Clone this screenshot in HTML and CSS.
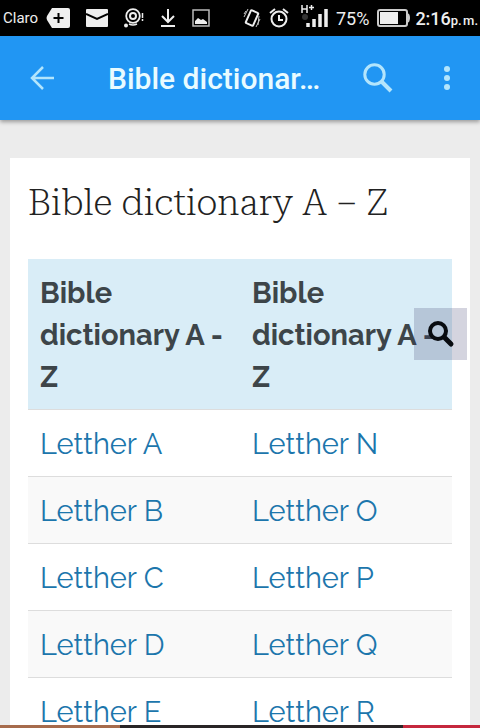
FILE: index.html
```html
<!DOCTYPE html>
<html lang="en">
<head>
  <meta charset="UTF-8" />
  <meta name="viewport" content="width=device-width, initial-scale=1.0" />
  <title>Bible dictionary A – Z</title>
  <link rel="stylesheet" href="styles.css">
</head>
<body>

  <div class="status-bar">
    <div class="status-left">
      <span>Claro</span>
      <svg width="24" height="20" viewBox="0 0 24 20"><path d="M6 0h16q2 0 2 2v16q0 2-2 2H6L1 12q-1-2 0-4z" fill="#eee"/><path d="M12.500 5v10M7.500 10h10" stroke="#000" stroke-width="2"/></svg>
      <svg width="22" height="18" viewBox="0 0 22 18"><rect width="22" height="18" rx="1" fill="#eee"/><path d="M0 5l11 5 11-5" fill="none" stroke="#000" stroke-width="2"/></svg>
      <svg width="20" height="20" viewBox="0 0 20 20"><circle cx="9" cy="8" r="6.800" fill="none" stroke="#eee" stroke-width="1.800"/><circle cx="9" cy="8" r="3" fill="none" stroke="#eee" stroke-width="2"/><circle cx="2" cy="17.500" r="2" fill="#eee"/><path d="M5 16q4 2 8 0M18.500 5v5M18.500 11v2" stroke="#eee" stroke-width="1.500" fill="none"/></svg>
      <svg width="16" height="20" viewBox="0 0 16 20"><path d="M8 1v13M2 8l6 6 6-6M1 18h14" fill="none" stroke="#eee" stroke-width="2"/></svg>
      <svg width="18" height="18" viewBox="0 0 18 18"><rect x="1" y="1" width="16" height="16" fill="none" stroke="#bbb" stroke-width="1.500"/><path d="M3 15v-3l3-3 3 2 2-1 4 3v2z" fill="#eee"/></svg>
    </div>
    <div class="status-right">
      <svg width="18" height="20" viewBox="0 0 18 20"><rect x="5" y="3" width="8" height="14" rx="1" transform="rotate(24 9 10)" fill="none" stroke="#eee" stroke-width="2"/><path d="M1 9l4-8M3 3L1 6M17 11l-4 8M16 8l-1 9" stroke="#ccc" fill="none"/></svg>
      <svg width="20" height="20" viewBox="0 0 20 20"><circle cx="10" cy="11" r="7.500" fill="none" stroke="#eee" stroke-width="2"/><path d="M10 7v5h4M1 5l5-4M19 5l-5-4" fill="none" stroke="#eee" stroke-width="2"/></svg>
      <svg class="signal" width="27" height="24" viewBox="0 0 27 24"><path d="M1 1v8M6 1v8M1 5h5M8 3.500h5M10.500 1v5" stroke="#eee" stroke-width="1.500"/><circle cx="4" cy="13" r="3" fill="#333"/><path d="M7 19v4M13 15v8M19 10v13M25 5v18" stroke="#eee" stroke-width="3.500"/></svg>
      <span class="battery-level">75%</span>
      <svg width="33" height="18" viewBox="0 0 33 18"><path d="M31 5q2 4 0 8" stroke="#ccc" stroke-width="2" fill="none"/><rect x="1" y="1" width="29" height="16" rx="2" fill="none" stroke="#ccc" stroke-width="2"/><path d="M3 3h18v12H3z" fill="#eee"/></svg>
      <span class="clock">2:16<small>p.&#8202;m.</small></span>
    </div>
  </div>

  <header class="app-bar">
    <button type="button" class="back" aria-label="Back">
      <svg width="24" height="24" viewBox="0 0 24 24"><path d="M24 12H2M13 1L2 12l11 11" fill="none" stroke="#b3e5fc" stroke-width="2.500"/></svg>
    </button>
    <div class="app-title">Bible dictionar…</div>
    <button type="button" class="search" aria-label="Search">
      <svg width="30" height="30" viewBox="0 0 30 30"><circle cx="11.500" cy="11.500" r="9.700" fill="none" stroke="#b3e5fc" stroke-width="3"/><path d="M19 19l9 9" stroke="#b3e5fc" stroke-width="4"/></svg>
    </button>
    <button type="button" class="more" aria-label="More options">
      <svg width="6" height="26" viewBox="0 0 6 26"><g fill="#b3e5fc"><circle cx="3" cy="4" r="3"/><circle cx="3" cy="13" r="3"/><circle cx="3" cy="22" r="3"/></g></svg>
    </button>
  </header>

  <main>
    <article class="card">
      <h1>Bible dictionary A – Z</h1>
      <table>
        <thead>
          <tr><th>Bible dictionary A - Z</th><th>Bible dictionary A - Z</th></tr>
        </thead>
        <tbody>
          <tr><td><a href="#a">Letther A</a></td><td><a href="#n">Letther N</a></td></tr>
          <tr><td><a href="#b">Letther B</a></td><td><a href="#o">Letther O</a></td></tr>
          <tr><td><a href="#c">Letther C</a></td><td><a href="#p">Letther P</a></td></tr>
          <tr><td><a href="#d">Letther D</a></td><td><a href="#q">Letther Q</a></td></tr>
          <tr><td><a href="#e">Letther E</a></td><td><a href="#r">Letther R</a></td></tr>
        </tbody>
      </table>
    </article>
  </main>

  <button type="button" class="float-search" aria-label="Search this site">
    <svg width="28" height="28" viewBox="0 0 28 28"><circle cx="11" cy="11" r="8" fill="none" stroke="#080b10" stroke-width="4"/><path d="M18 18l6 6" stroke="#080b10" stroke-width="5" stroke-linecap="round"/></svg>
  </button>

  <div class="ad-banner"></div>

</body>
</html>
```
FILE: styles.css
```css
* {
  box-sizing: border-box;
}
body {
  font-family: Raleway, Lato, sans-serif;
  background: #ececec;
  margin: 0;
  height: 100vh;
  display: flex;
  flex-direction: column;
  overflow: hidden;
}
svg {
  display: block;
  flex-shrink: 0;
}
button {
  border: none;
  padding: 0;
  background: none;
  cursor: pointer;
}
.status-bar {
  flex: none;
  height: 36px;
  padding: 0 2px 0 3px;
  display: flex;
  align-items: center;
  justify-content: space-between;
  background: #000;
  color: #eee;
  font-family: Roboto, sans-serif;
  font-size: 15px;
  white-space: nowrap;
}
.status-left {
  display: flex;
  align-items: center;
  gap: 16px;
}
.status-left span {
  margin-right: -8px;
}
.status-right {
  display: flex;
  align-items: center;
  gap: 8px;
}
.signal {
  margin: 0 0 4px 4px;
}
.battery-level {
  font-size: 18px;
}
.clock {
  font-size: 18px;
  font-weight: 500;
  margin-left: -3px;
}
.clock small {
  font-size: 13px;
}
.app-bar {
  flex: none;
  height: 84px;
  padding: 0 30px;
  display: flex;
  align-items: center;
  background: #2196f3;
  box-shadow: 0 2px 4px rgba(0, 0, 0, 0.35);
  font-family: Roboto, sans-serif;
  z-index: 1;
}
.app-title {
  flex: 1;
  margin: 0 40px 0 54px;
  color: #e9fbff;
  font-size: 30px;
  font-weight: 500;
  white-space: nowrap;
}
.more {
  margin-left: 51px;
}
main {
  flex: 1;
  min-height: 0;
  padding: 38px 10px 0;
  overflow: hidden;
}
.card {
  background: #fff;
  padding: 20px 18px;
}
h1 {
  margin: 0 0 31px;
  color: #222;
  font-family: "Roboto Slab", "Roboto Serif", "Liberation Serif", serif;
  font-size: 36px;
  font-weight: 200;
  line-height: 50px;
  white-space: nowrap;
}
table {
  width: 100%;
  table-layout: fixed;
  border-collapse: separate;
  border-spacing: 0;
  font-size: 29px;
  line-height: 42px;
}
th,
td {
  padding: 13px 12px 11px;
  text-align: left;
  vertical-align: top;
}
th {
  background: #d9edf7;
  color: #3d4549;
  font-weight: 700;
}
td {
  border-top: 1px solid #ddd;
}
tbody tr:nth-child(even) {
  background: #f9f9f9;
}
a {
  color: #1c76ac;
  text-decoration: none;
}
.float-search {
  position: absolute;
  top: 308px;
  right: 13px;
  width: 53px;
  height: 52px;
  display: flex;
  align-items: center;
  justify-content: center;
  background: rgba(60, 60, 110, 0.22);
}
.ad-banner {
  flex: none;
  height: 3px;
  background: linear-gradient(to right, #a66b4c 0 25%, #292526 25% 84%, #c5283d 84%);
}
```
